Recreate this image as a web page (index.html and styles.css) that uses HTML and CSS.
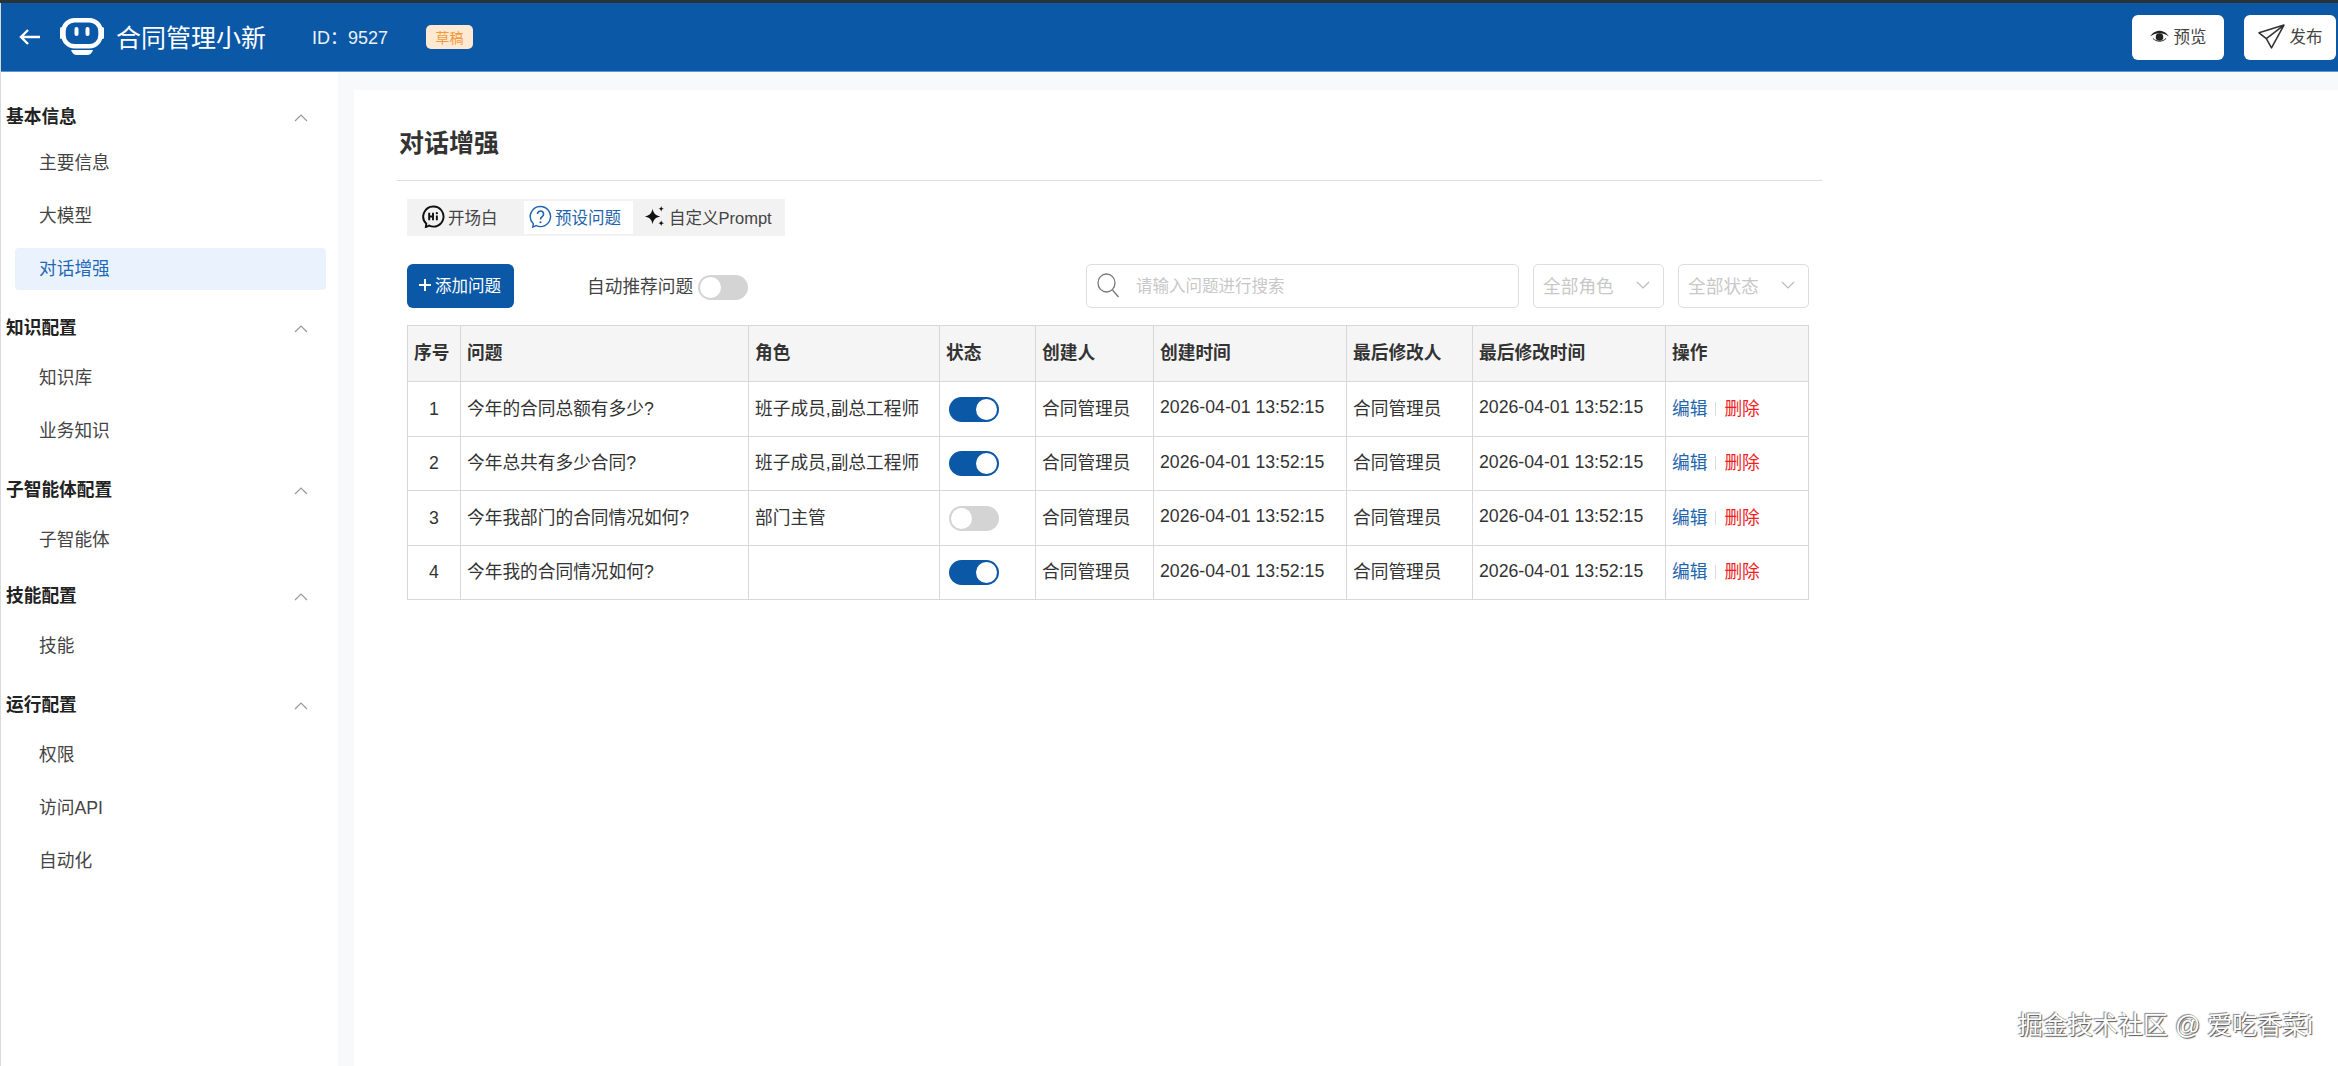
FILE: index.html
```html
<!DOCTYPE html>
<html lang="zh-CN">
<head>
<meta charset="utf-8">
<title>合同管理小新</title>
<link rel="stylesheet" href="styles.css">
</head>
<body>
<div class="topstrip"></div>
<header class="header">
  <svg class="back" viewBox="0 0 22 18" width="22" height="18"><path d="M21 9H2M9 2L2 9l7 7" fill="none" stroke="#fff" stroke-width="2.4"/></svg>
  <svg class="robot" viewBox="0 0 44 38" width="44" height="38">
    <rect x="3.500" y="2.200" width="37" height="26" rx="11" fill="none" stroke="#fff" stroke-width="4.400"/>
    <rect x="0" y="9" width="3" height="12" rx="1.500" fill="#fff"/>
    <rect x="41" y="9" width="3" height="12" rx="1.500" fill="#fff"/>
    <rect x="14.500" y="9" width="4" height="9" rx="2" fill="#fff"/>
    <rect x="25.500" y="9" width="4" height="9" rx="2" fill="#fff"/>
    <path d="M11 32h22c-1 3-3 5-6 5H17c-3 0-5-2-6-5z" fill="#fff"/>
  </svg>
  <h1 class="app-title">合同管理小新</h1>
  <span class="app-id">ID：9527</span>
  <span class="badge">草稿</span>
  <div class="header-actions">
    <button class="hbtn">
      <svg viewBox="0 0 20 12" width="19" height="12"><path d="M0 6.500C4 1 8 .5 10 .5s6 .5 10 6c-4-2.500-6-3.500-10-3.500S4 4 0 6.500z" fill="#222"/><circle cx="10" cy="7" r="4" fill="#222"/><path d="M3 8.500c2 2 4.500 3 7 3s5-1 7-3" fill="none" stroke="#222"/></svg>
      预览
    </button>
    <button class="hbtn">
      <svg viewBox="0 0 26 26" width="27" height="27"><path d="M25 2L1 9.500l7 5.500 5 9zM25 2L8 15M25 2L13 24" fill="none" stroke="#333" stroke-width="1.500" stroke-linejoin="round"/></svg>
      发布
    </button>
  </div>
</header>
<div class="layout">
  <nav class="sidebar">
    <section class="nav-group">
      <div class="nav-head"><span>基本信息</span><svg class="chev" viewBox="0 0 14 8" width="14" height="8"><path d="M1 7l6-6 6 6" fill="none" stroke="#999" stroke-width="1.200"/></svg></div>
      <a class="nav-item">主要信息</a>
      <a class="nav-item">大模型</a>
      <a class="nav-item active">对话增强</a>
    </section>
    <section class="nav-group">
      <div class="nav-head"><span>知识配置</span><svg class="chev" viewBox="0 0 14 8" width="14" height="8"><path d="M1 7l6-6 6 6" fill="none" stroke="#999" stroke-width="1.200"/></svg></div>
      <a class="nav-item">知识库</a>
      <a class="nav-item">业务知识</a>
    </section>
    <section class="nav-group">
      <div class="nav-head"><span>子智能体配置</span><svg class="chev" viewBox="0 0 14 8" width="14" height="8"><path d="M1 7l6-6 6 6" fill="none" stroke="#999" stroke-width="1.200"/></svg></div>
      <a class="nav-item">子智能体</a>
    </section>
    <section class="nav-group">
      <div class="nav-head"><span>技能配置</span><svg class="chev" viewBox="0 0 14 8" width="14" height="8"><path d="M1 7l6-6 6 6" fill="none" stroke="#999" stroke-width="1.200"/></svg></div>
      <a class="nav-item">技能</a>
    </section>
    <section class="nav-group">
      <div class="nav-head"><span>运行配置</span><svg class="chev" viewBox="0 0 14 8" width="14" height="8"><path d="M1 7l6-6 6 6" fill="none" stroke="#999" stroke-width="1.200"/></svg></div>
      <a class="nav-item">权限</a>
      <a class="nav-item">访问API</a>
      <a class="nav-item">自动化</a>
    </section>
  </nav>
  <main class="main">
    <div class="content">
      <h2 class="page-title">对话增强</h2>
      <div class="tabs">
        <div class="tab">
          <svg viewBox="0 0 24 24" width="23" height="23"><path d="M12 1.500a10.500 10.500 0 1 1-4.500 20l-3.500 1.500.5-3.500A10.500 10.500 0 0 1 12 1.500z" fill="none" stroke="#111" stroke-width="2"/><path d="M7.500 8v8M11.500 8v8M7.500 12h4M15.500 11v5" stroke="#111" stroke-width="2" fill="none"/><circle cx="15.500" cy="8.500" r="1.200" fill="#111"/></svg>
          开场白
        </div>
        <div class="tab current">
          <svg viewBox="0 0 24 24" width="23" height="23"><path d="M12 1.500a10.500 10.500 0 1 1-4.500 20l-3.500 1.500.5-3.500A10.500 10.500 0 0 1 12 1.500z" fill="none" stroke="#1f65ad" stroke-width="1.500"/><path d="M8.800 9.500a3.200 3.200 0 1 1 5 2.600c-1.200.8-1.800 1.400-1.800 2.900" fill="none" stroke="#1f65ad" stroke-width="1.700"/><circle cx="12" cy="18" r="1.100" fill="#1f65ad"/></svg>
          预设问题
        </div>
        <div class="tab">
          <svg viewBox="0 0 24 24" width="23" height="23"><path d="M10 4c1 5 3 7 8 8-5 1-7 3-8 8-1-5-3-7-8-8 5-1 7-3 8-8z" fill="#111"/><path d="M19 1c.4 2 1 2.600 3 3-2 .4-2.600 1-3 3-.4-2-1-2.600-3-3 2-.4 2.600-1 3-3zM19 16c.4 2 1 2.600 3 3-2 .4-2.600 1-3 3-.4-2-1-2.600-3-3 2-.4 2.600-1 3-3z" fill="#111"/></svg>
          自定义Prompt
        </div>
      </div>
      <div class="toolbar">
        <button class="add-btn"><svg viewBox="0 0 14 14" width="14" height="14"><path d="M7 1v12M1 7h12" stroke="#fff" stroke-width="2"/></svg>添加问题</button>
        <label class="auto">自动推荐问题<span class="switch small off"></span></label>
        <div class="filters">
          <div class="search">
            <svg viewBox="0 0 24 26" width="24" height="26"><ellipse cx="10.500" cy="11" rx="8.500" ry="9" fill="none" stroke="#777" stroke-width="1.300"/><path d="M16.500 18l6 7" stroke="#777" stroke-width="1.300"/></svg>
            <span>请输入问题进行搜索</span>
          </div>
          <div class="select"><span>全部角色</span><svg viewBox="0 0 14 8" width="14" height="8"><path d="M1 1l6 6 6-6" fill="none" stroke="#bbb" stroke-width="1.200"/></svg></div>
          <div class="select"><span>全部状态</span><svg viewBox="0 0 14 8" width="14" height="8"><path d="M1 1l6 6 6-6" fill="none" stroke="#bbb" stroke-width="1.200"/></svg></div>
        </div>
      </div>
      <table class="grid">
        <colgroup>
          <col class="c1"><col class="c2"><col class="c3"><col class="c4"><col class="c5"><col class="c6"><col class="c7"><col class="c8"><col class="c9">
        </colgroup>
        <thead>
          <tr><th>序号</th><th>问题</th><th>角色</th><th>状态</th><th>创建人</th><th>创建时间</th><th>最后修改人</th><th>最后修改时间</th><th>操作</th></tr>
        </thead>
        <tbody>
          <tr class="r-tall"><td class="num">1</td><td>今年的合同总额有多少?</td><td>班子成员,副总工程师</td><td class="st"><span class="switch"></span></td><td>合同管理员</td><td class="time">2026-04-01 13:52:15</td><td>合同管理员</td><td class="time">2026-04-01 13:52:15</td><td><a class="edit">编辑</a><i class="sep"></i><a class="del">删除</a></td></tr>
          <tr class="r-short"><td class="num">2</td><td>今年总共有多少合同?</td><td>班子成员,副总工程师</td><td class="st"><span class="switch"></span></td><td>合同管理员</td><td class="time">2026-04-01 13:52:15</td><td>合同管理员</td><td class="time">2026-04-01 13:52:15</td><td><a class="edit">编辑</a><i class="sep"></i><a class="del">删除</a></td></tr>
          <tr class="r-tall"><td class="num">3</td><td>今年我部门的合同情况如何?</td><td>部门主管</td><td class="st"><span class="switch off"></span></td><td>合同管理员</td><td class="time">2026-04-01 13:52:15</td><td>合同管理员</td><td class="time">2026-04-01 13:52:15</td><td><a class="edit">编辑</a><i class="sep"></i><a class="del">删除</a></td></tr>
          <tr class="r-short"><td class="num">4</td><td>今年我的合同情况如何?</td><td></td><td class="st"><span class="switch"></span></td><td>合同管理员</td><td class="time">2026-04-01 13:52:15</td><td>合同管理员</td><td class="time">2026-04-01 13:52:15</td><td><a class="edit">编辑</a><i class="sep"></i><a class="del">删除</a></td></tr>
        </tbody>
      </table>
    </div>
  </main>
</div>
<div class="watermark">掘金技术社区 @ 爱吃香菜i</div>
</body>
</html>
```
FILE: styles.css
```css
* { box-sizing: border-box; }
html, body { margin: 0; height: 100%; }
body {
  position: relative;
  width: 2338px;
  height: 1066px;
  overflow: hidden;
  background: #d8dadc;
  font-family: "Liberation Sans", "Noto Sans CJK SC", sans-serif;
  font-size: 17.700px;
  color: #333;
  display: flex;
  flex-direction: column;
}
.topstrip { height: 3px; background: #2a3338; flex: none; }

.header {
  flex: none;
  height: 69px;
  margin-left: 1px;
  background: #0b58a7;
  border-bottom: 1px solid #5a96d6;
  display: flex;
  align-items: center;
  padding-left: 18px;
  color: #fff;
}
.back { margin-right: 19px; }
.robot { margin-right: 13px; }
.app-title { margin: 0 0 -2px -1px; font-size: 25px; font-weight: 400; line-height: 1; width: 197px; }
.app-id { font-size: 18px; width: 114px; margin-left: -1px; margin-bottom: 2px; opacity: .92; }
.badge {
  width: 47px; height: 24px; border-radius: 5px;
  background: #ffe9d2; color: #f59a3c; font-size: 14px;
  display: flex; align-items: center; justify-content: center;
}
.header-actions { margin-left: auto; display: flex; gap: 20px; padding-right: 2px; }
.hbtn {
  width: 92px; height: 45px; border: 0; border-radius: 6px; background: #fff;
  font: inherit; font-size: 16.500px; color: #444;
  display: flex; align-items: center; justify-content: center; gap: 5px;
  padding: 0 0 2px;
}

.layout { flex: 1; display: flex; min-height: 0; margin-left: 1px; background: #f8f9fb; }
.sidebar { width: 337px; background: #fff; padding-top: 27px; flex: none; }
.nav-group:nth-child(2), .nav-group:nth-child(3), .nav-group:nth-child(5) { margin-top: 20px; }
.nav-group:nth-child(4) { margin-top: 17px; }
.nav-head {
  height: 34px; padding: 0 26px 2px 5px;
  display: flex; align-items: center; justify-content: space-between;
  font-weight: 700; color: #222;
}
.nav-head .chev { margin-right: 4px; margin-top: 5px; }
.nav-item {
  display: flex; align-items: center;
  height: 42px; margin: 11px 12px 0 14px; padding: 0 0 5px 24px;
  color: #444; border-radius: 4px;
}
.nav-item.active { background: #eaf3fd; color: #1f68b8; }
.nav-head + .nav-item { margin-top: 13px; }
.nav-group:first-child .nav-head + .nav-item { margin-top: 9px; }

.main { margin: 18px 0 0 16px; flex: 1; background: #fff; }
.content { width: 1425px; margin-left: 43px; padding-top: 17px; }
.page-title {
  margin: 0; height: 74px; padding: 18px 0 0 2px;
  font-size: 25px; font-weight: 700; line-height: 36px; color: #333;
  border-bottom: 1px solid #ddd;
}
.tabs {
  margin: 18px 0 0 10px; width: 378px; height: 37px; background: #f2f2f2;
  display: flex; align-items: center; padding-left: 0;
}
.tab {
  height: 33px; display: flex; align-items: center; gap: 3px;
  padding: 0 15px 2px; font-size: 16.500px; color: #444; white-space: nowrap;
}
.tab:first-child { width: 117px; }
.tab.current { width: 109px; background: #fff; color: #1f65ad; padding: 0 0 2px 5px; }
.tab:last-child { padding: 0 0 2px 10px; }

.toolbar { margin: 28px 0 0 10px; height: 44px; width: 1402px; display: flex; align-items: center; }
.add-btn {
  width: 107px; height: 44px; border: 0; border-radius: 6px; background: #0b58a7; color: #fff;
  font: inherit; font-size: 16.500px; padding: 0 2px 2px 0; display: flex; align-items: center; justify-content: center; gap: 3px;
}
.auto { margin-left: 73px; padding-bottom: 2px; display: flex; align-items: center; gap: 5px; font-size: 17.700px; color: #444; }
.filters { margin-left: auto; display: flex; gap: 14px; }
.search, .select {
  height: 44px; border: 1px solid #ddd; border-radius: 5px; background: #fff;
  display: flex; align-items: center; color: #c8c8c8; font-size: 17.700px; padding-bottom: 2px;
}
.search { width: 433px; padding-left: 9px; gap: 16px; font-size: 16.500px; }
.select { width: 131px; padding: 0 13px 2px 9px; justify-content: space-between; }

.switch {
  display: inline-block; position: relative; width: 50px; height: 25px; border-radius: 13px;
  background: #0b58a7; vertical-align: middle;
}
.switch::after {
  content: ""; position: absolute; top: 2px; right: 2px; width: 21px; height: 21px;
  border-radius: 50%; background: #fff;
}
.switch.off { background: #d4d4d4; }
.switch.off::after { right: auto; left: 2px; }
.switch.small { margin-top: 4px; }

.grid {
  margin: 17px 0 0 10px; border-collapse: collapse; table-layout: fixed; width: 1401px;
  font-size: 17.700px;
}
.c1 { width: 53px; } .c2 { width: 288px; } .c3 { width: 191px; } .c4 { width: 96px; }
.c5 { width: 118px; } .c6 { width: 193px; } .c7 { width: 126px; } .c8 { width: 193px; } .c9 { width: 143px; }
.grid th, .grid td { border: 1px solid #d8d8d8; padding: 0 6px 5px; text-align: left; white-space: nowrap; overflow: hidden; color: #333; }
.grid th { background: #f5f5f5; height: 56px; font-weight: 700; padding-bottom: 6px; }
.r-tall td { height: 55px; }
.r-short td { height: 54px; }
.grid td.num { text-align: center; padding-bottom: 0; }
.grid td.time { padding-bottom: 3px; }
.grid td.st { padding: 0 0 0 9px; }
.edit { color: #1f65ad; }
.del { color: #f01f1f; }
.sep { display: inline-block; width: 1px; height: 14px; background: #ddd; margin: 0 8px; vertical-align: -1px; }

.watermark {
  position: absolute; left: 2018px; top: 1010px;
  font-size: 25px; line-height: 30px; color: #fff; white-space: nowrap;
  text-shadow: 1px 1px 1px #555, -1px -1px 1px #888;
}
```
